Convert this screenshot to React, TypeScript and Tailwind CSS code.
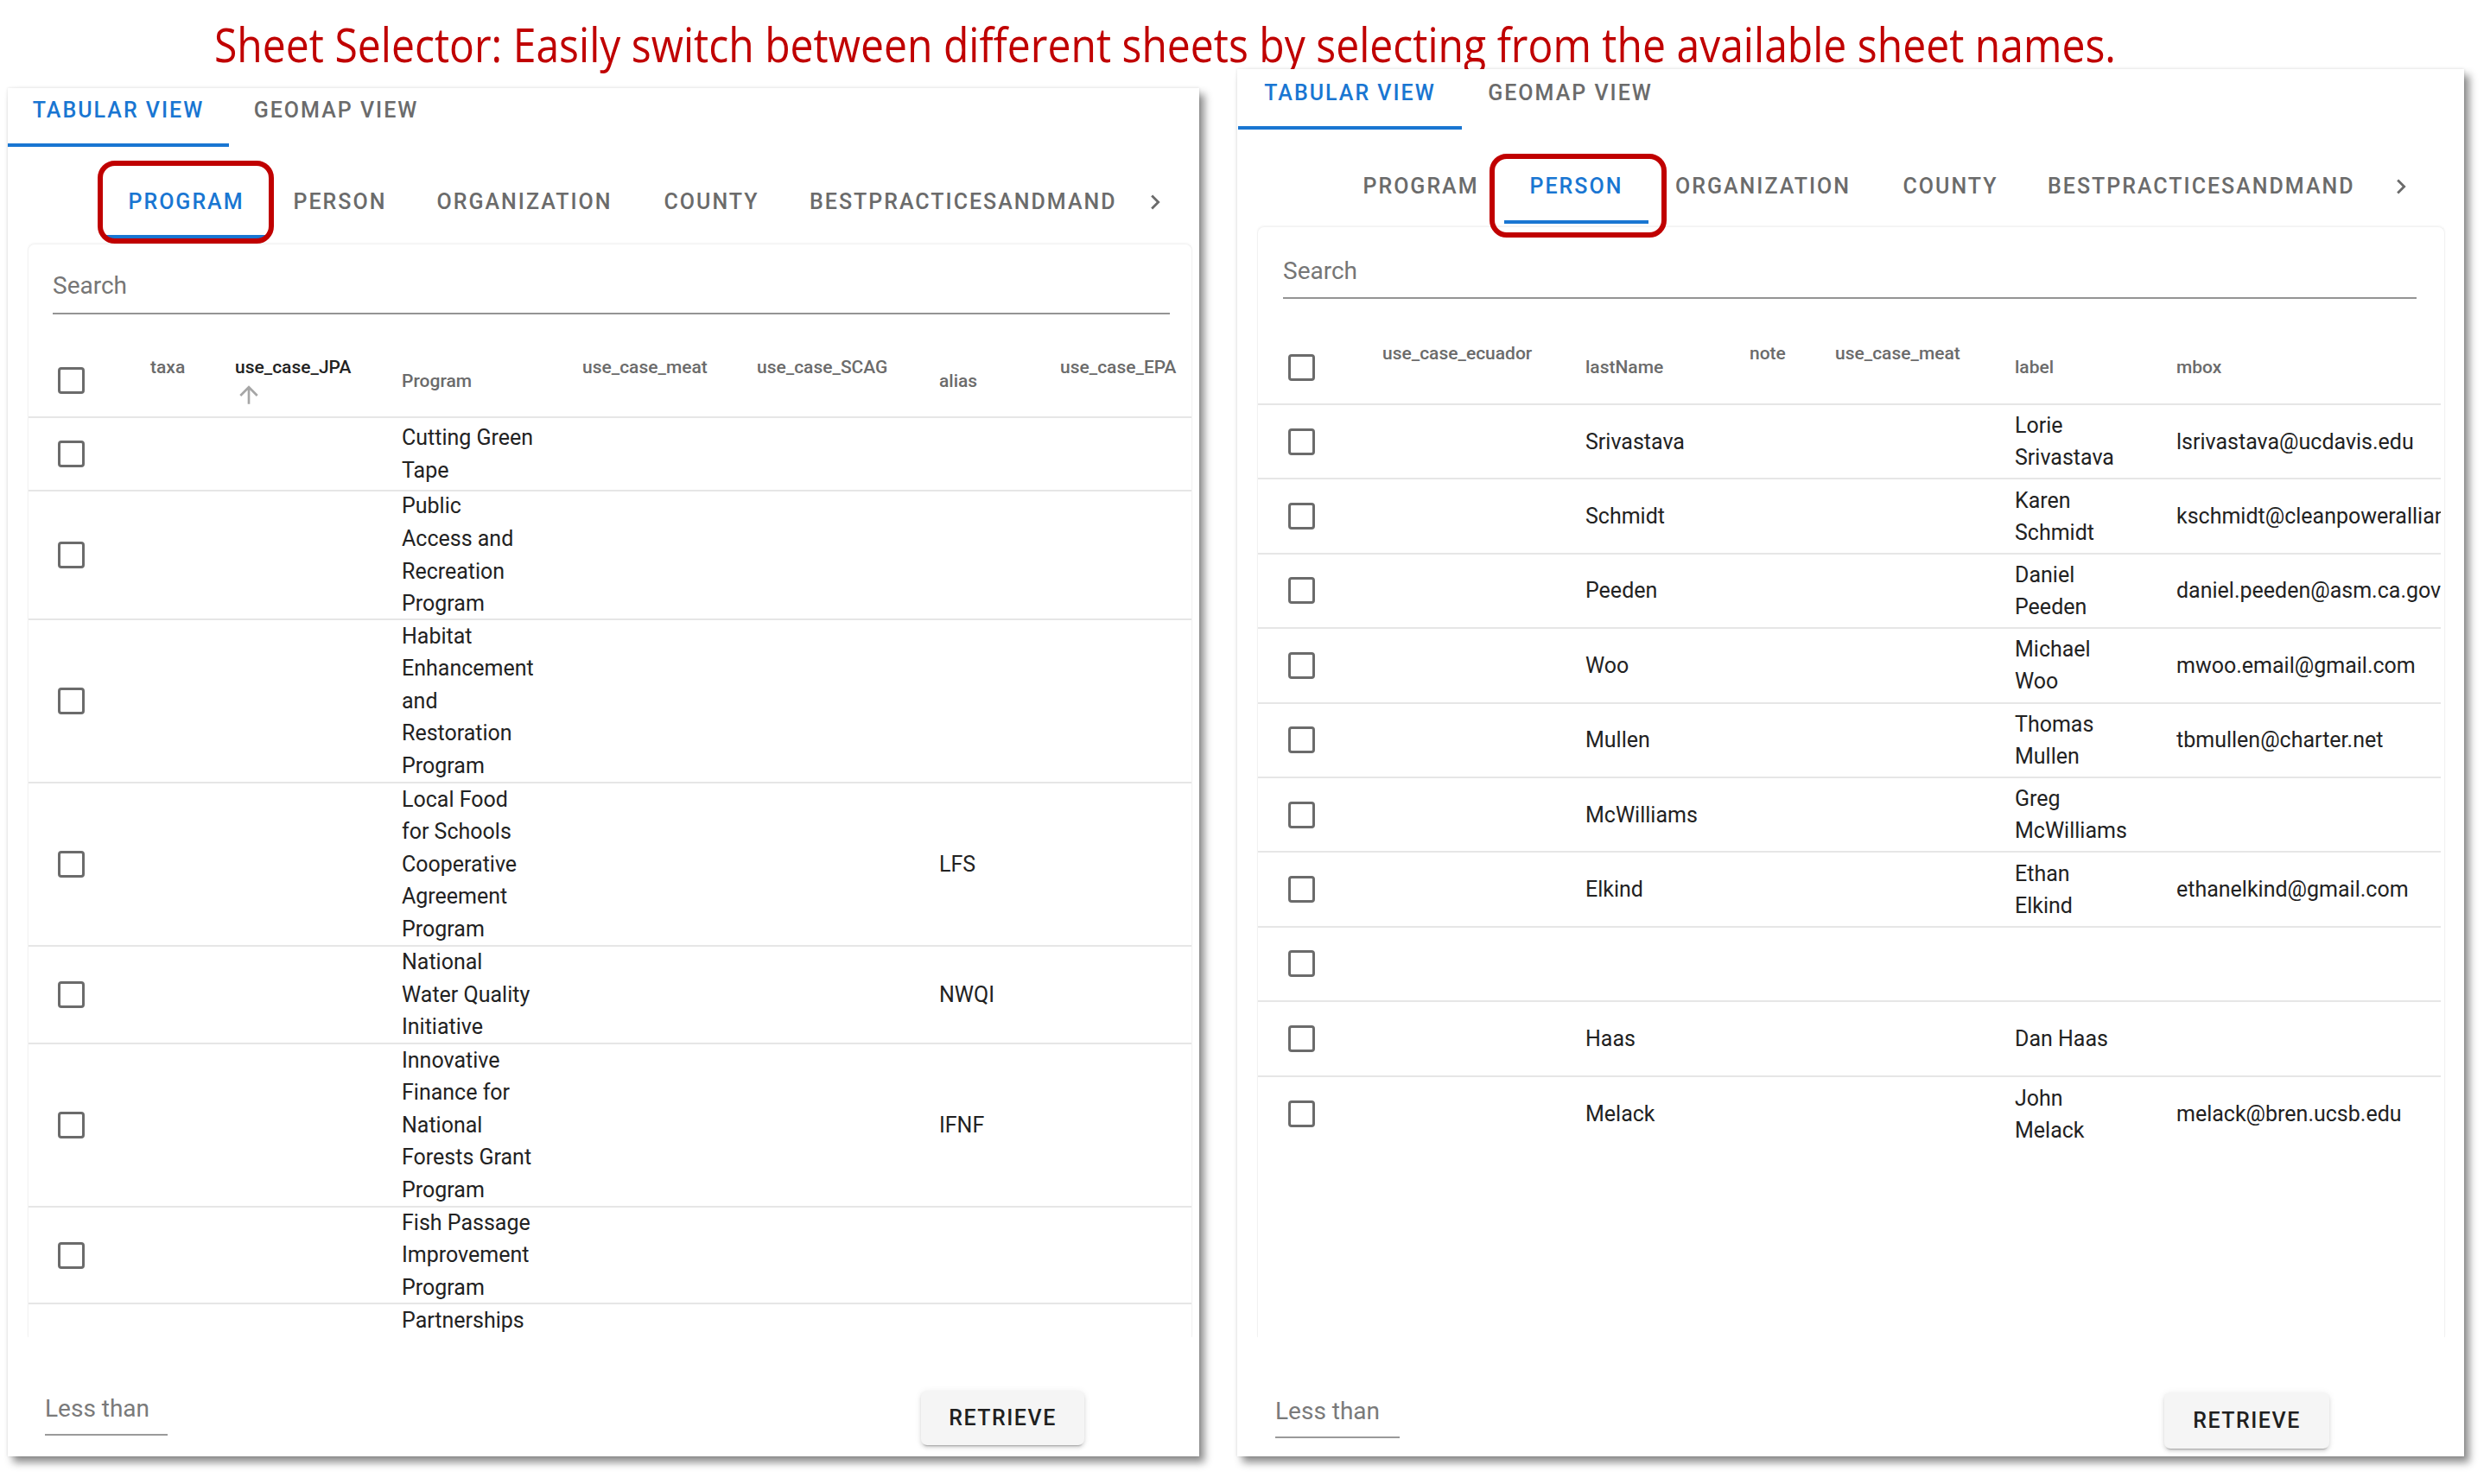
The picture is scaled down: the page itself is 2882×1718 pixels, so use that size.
import React from "react";

function Checkbox() {
  return <div className="w-[31px] h-[31px] rounded-[4px] border-[3px] border-[#6b6b6b] shrink-0 box-border" />;
}

function ArrowUp({ visible }: { visible: boolean }) {
  return (
    <svg width="32" height="32" viewBox="0 0 24 24" className={visible ? "block" : "block invisible"} fill="#a6a6a6">
      <path d="M4 12l1.41 1.41L11 7.83V20h2V7.83l5.58 5.59L20 12l-8-8-8 8z" />
    </svg>
  );
}

function Chevron() {
  return (
    <svg width="34" height="34" viewBox="0 0 24 24" fill="#6b6b6b">
      <path d="M8.59 16.59 13.17 12 8.59 7.41 10 6l6 6-6 6z" />
    </svg>
  );
}

type HeadCol = { w: string; label: string; top: boolean; dark?: boolean; arrow?: boolean };

function HeaderCell({ c }: { c: HeadCol }) {
  return (
    <div className={`${c.w} shrink-0 flex items-center`}>
      <div className="flex flex-col">
        <div
          className={`leading-[32px] text-[21px] font-medium whitespace-nowrap ${c.dark ? "text-[#222222]" : "text-[#6b6b6b]"}`}
        >
          {c.label}
        </div>
        {c.top ? <ArrowUp visible={!!c.arrow} /> : null}
      </div>
    </div>
  );
}

function Lines({ lines, leading }: { lines: string[]; leading: string }) {
  return (
    <div className={`flex flex-col text-[25px] text-[#222222] ${leading}`}>
      {lines.map((l, i) => (
        <div key={i} className="whitespace-nowrap">
          {l}
        </div>
      ))}
    </div>
  );
}

const leftHead: HeadCol[] = [
  { w: "w-[98px]", label: "taxa", top: true },
  { w: "w-[193px]", label: "use_case_JPA", top: true, dark: true, arrow: true },
  { w: "w-[209px]", label: "Program", top: false },
  { w: "w-[202px]", label: "use_case_meat", top: true },
  { w: "w-[211px]", label: "use_case_SCAG", top: true },
  { w: "w-[140px]", label: "alias", top: false },
  { w: "w-[154px]", label: "use_case_EPA", top: true },
];

const leftRows: { prog: string[]; alias?: string; h: string; topAlign?: boolean }[] = [
  { prog: ["Cutting Green", "Tape"], h: "h-[85px]" },
  { prog: ["Public", "Access and", "Recreation", "Program"], h: "h-[149px]" },
  { prog: ["Habitat", "Enhancement", "and", "Restoration", "Program"], h: "h-[189px]" },
  { prog: ["Local Food", "for Schools", "Cooperative", "Agreement", "Program"], alias: "LFS", h: "h-[189px]" },
  { prog: ["National", "Water Quality", "Initiative"], alias: "NWQI", h: "h-[113px]" },
  { prog: ["Innovative", "Finance for", "National", "Forests Grant", "Program"], alias: "IFNF", h: "h-[189px]" },
  { prog: ["Fish Passage", "Improvement", "Program"], h: "h-[112px]" },
  { prog: ["Partnerships"], h: "h-[150px]", topAlign: true },
];

const rightHead: HeadCol[] = [
  { w: "w-[235px]", label: "use_case_ecuador", top: true },
  { w: "w-[190px]", label: "lastName", top: false },
  { w: "w-[99px]", label: "note", top: true },
  { w: "w-[208px]", label: "use_case_meat", top: true },
  { w: "w-[187px]", label: "label", top: false },
  { w: "w-[306px]", label: "mbox", top: false },
];

const rightRows: { last: string; label: string[]; mbox: string }[] = [
  { last: "Srivastava", label: ["Lorie", "Srivastava"], mbox: "lsrivastava@ucdavis.edu" },
  { last: "Schmidt", label: ["Karen", "Schmidt"], mbox: "kschmidt@cleanpoweralliance.org" },
  { last: "Peeden", label: ["Daniel", "Peeden"], mbox: "daniel.peeden@asm.ca.gov" },
  { last: "Woo", label: ["Michael", "Woo"], mbox: "mwoo.email@gmail.com" },
  { last: "Mullen", label: ["Thomas", "Mullen"], mbox: "tbmullen@charter.net" },
  { last: "McWilliams", label: ["Greg", "McWilliams"], mbox: "" },
  { last: "Elkind", label: ["Ethan", "Elkind"], mbox: "ethanelkind@gmail.com" },
  { last: "", label: [], mbox: "" },
  { last: "Haas", label: ["Dan Haas"], mbox: "" },
  { last: "Melack", label: ["John", "Melack"], mbox: "melack@bren.ucsb.edu" },
];

function TabText({ children, active }: { children: React.ReactNode; active?: boolean }) {
  return (
    <span
      className={`text-[25px] font-medium uppercase tracking-[0.08em] leading-[32px] whitespace-nowrap ${
        active ? "text-[#1976d2]" : "text-[#6b6b6b]"
      }`}
    >
      {children}
    </span>
  );
}

function BottomBar({ fieldMl, fieldW, fieldMt, btnMl, btnMt, btnW, btnH }: any) {
  return (
    <div className="flex-1 flex items-start">
      <div className={`${fieldMl} ${fieldMt} ${fieldW} pb-[9px] border-b-2 border-[#9a9a9a] text-[28px] leading-[40px] text-[#7a7a7a]`}>
        Less than
      </div>
      <div
        className={`${btnMl} ${btnMt} ${btnW} ${btnH} rounded-[7px] bg-[#f5f5f5] flex items-center justify-center shadow-[0_4px_2px_-3px_rgba(0,0,0,0.25),0_3px_4px_rgba(0,0,0,0.12),0_1px_8px_rgba(0,0,0,0.08)]`}
      >
        <span className="text-[25px] font-medium tracking-[0.06em] text-[#1f1f1f]">RETRIEVE</span>
      </div>
    </div>
  );
}

function LeftPanel() {
  return (
    <div className="relative mt-[22px] ml-[9px] w-[1379px] h-[1584px] bg-white flex flex-col shrink-0 shadow-[0_0_3px_rgba(0,0,0,0.12),6px_7px_9px_rgba(0,0,0,0.45)]">
      {/* main tabs */}
      <div className="h-[68px] flex shrink-0">
        <div className="w-[256px] h-full flex justify-center pt-[10px] border-b-4 border-[#1976d2]">
          <TabText active>Tabular View</TabText>
        </div>
        <div className="w-[248px] h-full flex justify-center pt-[10px]">
          <TabText>Geomap View</TabText>
        </div>
      </div>
      {/* sheet tabs */}
      <div className="mt-[18px] ml-[37px] h-[88px] flex shrink-0">
        <div className="w-[74px] h-full" />
        <div className="w-[1180px] h-full flex overflow-hidden">
          <div className="w-[191px] shrink-0 h-full flex items-center justify-center pt-[8px] border-b-4 border-[#1976d2]">
            <TabText active>Program</TabText>
          </div>
          <div className="w-[165px] shrink-0 h-full flex items-center justify-center pt-[8px] border-b-4 border-transparent">
            <TabText>Person</TabText>
          </div>
          <div className="w-[262px] shrink-0 h-full flex items-center justify-center pt-[8px] border-b-4 border-transparent">
            <TabText>Organization</TabText>
          </div>
          <div className="w-[171px] shrink-0 h-full flex items-center justify-center pt-[8px] border-b-4 border-transparent">
            <TabText>County</TabText>
          </div>
          <div className="w-[414px] shrink-0 h-full flex items-center pl-[28px] pt-[8px] border-b-4 border-transparent">
            <TabText>BestPracticesAndMand</TabText>
          </div>
        </div>
        <div className="w-[74px] h-full flex items-center justify-center pt-[4px]">
          <Chevron />
        </div>
      </div>
      {/* card */}
      <div className="mt-[6px] ml-[23px] w-[1348px] h-[1266px] shrink-0 rounded-t-[8px] border-x border-t border-[#f2f2f2] shadow-[0_-1px_2px_rgba(0,0,0,0.04)] flex flex-col overflow-hidden">
        <div className="ml-[28px] w-[1293px] h-[81px] pt-[28px] border-b-2 border-[#949494] shrink-0">
          <div className="text-[28px] leading-[40px] text-[#767676]">Search</div>
        </div>
        <div className="mt-[35px] flex flex-col">
          <div className="h-[85px] flex border-b-2 border-[#e6e6e6] shrink-0">
            <div className="w-[141px] shrink-0 flex items-center pl-[34px]">
              <Checkbox />
            </div>
            {leftHead.map((c) => (
              <HeaderCell key={c.label} c={c} />
            ))}
          </div>
          {leftRows.map((r, i) => (
            <div key={i} className={`${r.h} flex border-b-2 border-[#e6e6e6] shrink-0`}>
              <div className="w-[141px] shrink-0 flex items-center pl-[34px]">
                <Checkbox />
              </div>
              <div className="w-[98px] shrink-0" />
              <div className="w-[193px] shrink-0" />
              <div className={`w-[209px] shrink-0 flex ${r.topAlign ? "items-start" : "items-center"}`}>
                <Lines lines={r.prog} leading="leading-[37.6px]" />
              </div>
              <div className="w-[202px] shrink-0" />
              <div className="w-[211px] shrink-0" />
              <div className="w-[140px] shrink-0 flex items-center">
                {r.alias ? <Lines lines={[r.alias]} leading="leading-[37.6px]" /> : null}
              </div>
              <div className="w-[154px] shrink-0" />
            </div>
          ))}
        </div>
      </div>
      <BottomBar
        fieldMl="ml-[43px]"
        fieldW="w-[142px]"
        fieldMt="mt-[63px]"
        btnMl="ml-[872px]"
        btnMt="mt-[62px]"
        btnW="w-[189px]"
        btnH="h-[63px]"
      />
      {/* highlight annotation */}
      <div className="absolute left-[104px] top-[84px] w-[204px] h-[96px] rounded-[20px] border-[6px] border-[#c00000]" />
    </div>
  );
}

function RightPanel() {
  return (
    <div className="relative ml-[44px] w-[1420px] h-[1606px] bg-white flex flex-col shrink-0 shadow-[0_0_3px_rgba(0,0,0,0.12),6px_7px_9px_rgba(0,0,0,0.45)]">
      {/* main tabs */}
      <div className="h-[70px] ml-[1px] flex shrink-0">
        <div className="w-[259px] h-full flex justify-center pt-[12px] border-b-4 border-[#1976d2]">
          <TabText active>Tabular View</TabText>
        </div>
        <div className="w-[251px] h-full flex justify-center pt-[12px]">
          <TabText>Geomap View</TabText>
        </div>
      </div>
      {/* sheet tabs */}
      <div className="mt-[21px] ml-[42px] h-[88px] flex shrink-0">
        <div className="w-[74px] h-full" />
        <div className="w-[1194px] h-full flex overflow-hidden">
          <div className="w-[193px] shrink-0 h-full flex items-center justify-center pt-[6px] border-b-4 border-transparent">
            <TabText>Program</TabText>
          </div>
          <div className="w-[167px] shrink-0 h-full flex items-center justify-center pt-[6px] border-b-4 border-[#1976d2]">
            <TabText active>Person</TabText>
          </div>
          <div className="w-[265px] shrink-0 h-full flex items-center justify-center pt-[6px] border-b-4 border-transparent">
            <TabText>Organization</TabText>
          </div>
          <div className="w-[169px] shrink-0 h-full flex items-center justify-center pt-[6px] border-b-4 border-transparent">
            <TabText>County</TabText>
          </div>
          <div className="w-[420px] shrink-0 h-full flex items-center pl-[28px] pt-[6px] border-b-4 border-transparent">
            <TabText>BestPracticesAndMand</TabText>
          </div>
        </div>
        <div className="w-[74px] h-full flex items-center justify-center pt-[2px]">
          <Chevron />
        </div>
      </div>
      {/* card */}
      <div className="mt-[3px] ml-[23px] w-[1375px] h-[1286px] shrink-0 rounded-t-[8px] border-x border-t border-[#f2f2f2] shadow-[0_-1px_2px_rgba(0,0,0,0.04)] flex flex-col overflow-hidden">
        <div className="ml-[29px] w-[1312px] h-[83px] pt-[31px] border-b-2 border-[#949494] shrink-0">
          <div className="text-[28px] leading-[40px] text-[#767676]">Search</div>
        </div>
        <div className="mt-[37px] w-[1369px] overflow-hidden flex flex-col">
          <div className="h-[86px] flex border-b-2 border-[#e6e6e6] shrink-0">
            <div className="w-[144px] shrink-0 flex items-center pl-[35px]">
              <Checkbox />
            </div>
            {rightHead.map((c) => (
              <HeaderCell key={c.label} c={c} />
            ))}
          </div>
          {rightRows.map((r, i) => (
            <div
              key={i}
              className={`h-[86.4px] flex shrink-0 ${i === rightRows.length - 1 ? "" : "border-b-2 border-[#e6e6e6]"}`}
            >
              <div className="w-[144px] shrink-0 flex items-center pl-[35px]">
                <Checkbox />
              </div>
              <div className="w-[235px] shrink-0" />
              <div className="w-[190px] shrink-0 flex items-center">
                {r.last ? <Lines lines={[r.last]} leading="leading-[37px]" /> : null}
              </div>
              <div className="w-[99px] shrink-0" />
              <div className="w-[208px] shrink-0" />
              <div className="w-[187px] shrink-0 flex items-center">
                {r.label.length ? <Lines lines={r.label} leading="leading-[37px]" /> : null}
              </div>
              <div className="w-[306px] shrink-0 flex items-center overflow-hidden">
                {r.mbox ? <Lines lines={[r.mbox]} leading="leading-[37px]" /> : null}
              </div>
            </div>
          ))}
        </div>
      </div>
      <BottomBar
        fieldMl="ml-[44px]"
        fieldW="w-[144px]"
        fieldMt="mt-[66px]"
        btnMl="ml-[885px]"
        btnMt="mt-[64px]"
        btnW="w-[191px]"
        btnH="h-[65px]"
      />
      <div className="absolute left-[292px] top-[98px] w-[205px] h-[97px] rounded-[20px] border-[6px] border-[#c00000]" />
    </div>
  );
}

export default function App() {
  return (
    <div className="w-[2882px] h-[1718px] bg-white overflow-hidden font-[family-name:Roboto]">
      <div className="h-[80px] pl-[248px] pt-[24px]">
        <div className="origin-left scale-x-[0.89] text-[54px] leading-none text-[#c00000] whitespace-nowrap font-[family-name:Open_Sans,sans-serif]">
          Sheet Selector: Easily switch between different sheets by selecting from the available sheet names.
        </div>
      </div>
      <div className="flex items-start">
        <LeftPanel />
        <RightPanel />
      </div>
    </div>
  );
}
